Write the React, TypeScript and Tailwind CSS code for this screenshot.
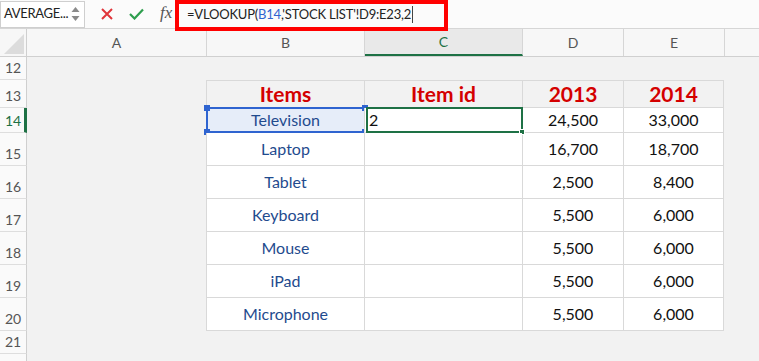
import React from "react";

const F = { fontFamily: "Lato, 'Open Sans', sans-serif" };

const rows: { n: number; h: number }[] = [
  { n: 12, h: 23 },
  { n: 13, h: 28 },
  { n: 14, h: 25 },
  { n: 15, h: 33 },
  { n: 16, h: 33 },
  { n: 17, h: 33 },
  { n: 18, h: 33 },
  { n: 19, h: 33 },
  { n: 20, h: 33 },
  { n: 21, h: 23 },
  { n: 22, h: 23 },
];

const data: Record<number, [string, string, string, string]> = {
  14: ["Television", "2", "24,500", "33,000"],
  15: ["Laptop", "", "16,700", "18,700"],
  16: ["Tablet", "", "2,500", "8,400"],
  17: ["Keyboard", "", "5,500", "6,000"],
  18: ["Mouse", "", "5,500", "6,000"],
  19: ["iPad", "", "5,500", "6,000"],
  20: ["Microphone", "", "5,500", "6,000"],
};

function Handle({ pos }: { pos: string }) {
  return <div className={`absolute w-[6px] h-[6px] bg-[#2f64d0] ${pos}`} />;
}

export default function App() {
  return (
    <div className="w-[759px] h-[361px] overflow-hidden bg-[#f2f2f2] relative" style={F}>
      {/* formula bar */}
      <div className="h-[29px] bg-[#fbfbfb] border-b border-[#d6d6d6] flex items-center relative">
        <div className="w-[85px] h-[27px] bg-white border border-[#cfcfcf] flex items-center justify-between pl-[3px] pr-[4px]">
          <span className="text-[13px] text-[#222] tracking-[-0.3px]">AVERAGE...</span>
          <svg width="9" height="18" viewBox="0 0 9 18">
            <path d="M4.5 2 L8.5 7 H0.5 Z" fill="#8a8a8a" />
            <path d="M4.5 16 L8.5 11 H0.5 Z" fill="#8a8a8a" />
          </svg>
        </div>
        <div className="w-[9px]" />
        <div className="flex items-center gap-[16px] ml-[7px]">
          <svg width="12" height="12" viewBox="0 0 12 12">
            <path d="M1 1 L11 11 M11 1 L1 11" stroke="#e0353a" strokeWidth="2" />
          </svg>
          <svg width="15" height="12" viewBox="0 0 15 12">
            <path d="M1 6 L5.5 10.5 L14 1.5" stroke="#2e9e4e" strokeWidth="2.2" fill="none" />
          </svg>
          <span className="text-[17px] italic text-[#555] -mt-[2px]" style={{ fontFamily: "'Liberation Serif', serif" }}>
            fx
          </span>
        </div>
        <div className="absolute left-[175px] top-0 w-[273px] h-[31px] border-[4px] border-[#ff0000] flex items-center pl-[8px] z-10">
          <span className="text-[13px] text-[#222] tracking-[-0.2px] -mt-[2px]">
            =VLOOKUP(<span className="text-[#2f64d0]">B14</span>,'STOCK LIST'!D9:E23,2
          </span>
          <span className="w-px h-[17px] bg-[#444] ml-px -mt-[2px]" />
        </div>
      </div>

      {/* column headers */}
      <div className="h-[28px] flex bg-[#f7f7f7] border-b border-[#d0d0d0] text-[14px] text-[#555]">
        <div className="w-[27px] border-r border-[#cfcfcf] relative bg-[#f7f7f7]">
          <svg className="absolute right-[2px] bottom-[2px]" width="20" height="20" viewBox="0 0 20 20">
            <path d="M20 0 L20 20 L0 20 Z" fill="#dcdcdc" />
          </svg>
        </div>
        <div className="w-[180px] border-r border-[#d6d6d6] flex items-center justify-center">A</div>
        <div className="w-[158px] border-r border-[#d6d6d6] flex items-center justify-center">B</div>
        <div className="w-[158px] border-r border-[#d6d6d6] flex items-center justify-center bg-[#e9e9e9] text-[#1e7145] border-b-[2px] border-b-[#1e7145]">
          C
        </div>
        <div className="w-[101px] border-r border-[#d6d6d6] flex items-center justify-center">D</div>
        <div className="w-[101px] border-r border-[#d6d6d6] flex items-center justify-center">E</div>
        <div className="flex-1" />
      </div>

      {/* rows */}
      {rows.map(({ n, h }) => {
        const isHead = n === 13;
        const d = data[n];
        const inTable = isHead || !!d;
        const sel = n === 14;
        return (
          <div key={n} className="flex" style={{ height: h }}>
            <div
              className={`w-[27px] shrink-0 bg-[#fafafa] border-b border-[#dedede] flex items-end pl-[5px] pb-[1px] text-[14px] ${
                sel ? "text-[#1e7145] border-r-[3px] border-r-[#1e7145]" : "text-[#555] border-r border-r-[#cfcfcf]"
              }`}
            >
              {n === 22 ? "" : n}
            </div>
            <div className="w-[179px] shrink-0" />
            {inTable ? (
              <>
                <div
                  className={`w-[158px] shrink-0 relative flex items-center justify-center border-l border-b border-[#d9d9d9] ${
                    isHead ? "bg-[#f2f2f2] border-t" : sel ? "bg-[#e6edf9]" : "bg-white"
                  }`}
                >
                  {isHead ? (
                    <span className="text-[21px] font-bold text-[#d40000]">Items</span>
                  ) : (
                    <span className="text-[16px] text-[#1f4b8e]">{d[0]}</span>
                  )}
                  {sel && (
                    <div className="absolute -left-px -top-px -right-[2px] -bottom-px border-[2px] border-[#2f64d0]">
                      <Handle pos="-left-[4px] -top-[4px]" />
                      <Handle pos="-right-[4px] -top-[4px]" />
                      <Handle pos="-left-[4px] -bottom-[4px]" />
                      <Handle pos="-right-[4px] -bottom-[4px]" />
                    </div>
                  )}
                </div>
                <div
                  className={`w-[158px] shrink-0 relative flex items-center border-l border-b border-[#d9d9d9] ${
                    isHead ? "bg-[#f2f2f2] border-t justify-center" : "bg-white"
                  }`}
                >
                  {isHead ? (
                    <span className="text-[21px] font-bold text-[#d40000]">Item id</span>
                  ) : (
                    <span className="text-[16px] text-[#111] pl-[4px]">{d[1]}</span>
                  )}
                  {sel && (
                    <div className="absolute left-[1px] -top-px -right-px -bottom-px border-[2px] border-[#1e7145]">
                      <div className="absolute -right-[4px] -bottom-[4px] w-[6px] h-[6px] bg-[#1e7145] border border-white" />
                    </div>
                  )}
                </div>
                <div
                  className={`w-[101px] shrink-0 flex items-center justify-center border-l border-b border-[#d9d9d9] ${
                    isHead ? "bg-[#f2f2f2] border-t" : "bg-white"
                  }`}
                >
                  {isHead ? (
                    <span className="text-[21px] font-bold text-[#d40000]">2013</span>
                  ) : (
                    <span className="text-[16px] text-[#111]">{d[2]}</span>
                  )}
                </div>
                <div
                  className={`w-[101px] shrink-0 flex items-center justify-center border-l border-r border-b border-[#d9d9d9] ${
                    isHead ? "bg-[#f2f2f2] border-t" : "bg-white"
                  }`}
                >
                  {isHead ? (
                    <span className="text-[21px] font-bold text-[#d40000]">2014</span>
                  ) : (
                    <span className="text-[16px] text-[#111]">{d[3]}</span>
                  )}
                </div>
              </>
            ) : null}
          </div>
        );
      })}
    </div>
  );
}
